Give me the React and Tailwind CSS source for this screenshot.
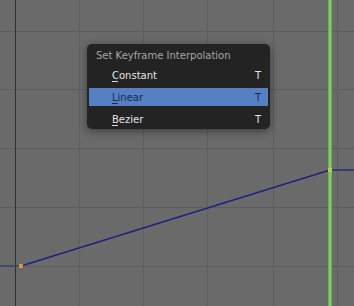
import React from 'react';

const items = [
  { label: 'Constant', key: 'T' },
  { label: 'Linear', key: 'T', active: true },
  { label: 'Bezier', key: 'T' },
];

function Graph() {
  const vLines = [79, 143, 207, 273, 337];
  const hLines = [31, 89, 148, 207, 266];
  return (
    <svg width="354" height="306" className="absolute inset-0" shapeRendering="crispEdges">
      {hLines.map((y) => (
        <rect key={'h' + y} x="0" y={y} width="354" height="1" fill="#5e5e5e" />
      ))}
      {vLines.map((x) => (
        <rect key={'v' + x} x={x} y="0" width="1" height="306" fill="#5e5e5e" />
      ))}
      <rect x="15" y="0" width="1" height="306" fill="#2f2f2f" />
      <rect x="328" y="0" width="4" height="306" fill="#6cb257" />
      <rect x="329" y="0" width="2" height="306" fill="#84c86e" />
      <g shapeRendering="auto">
        <line x1="0" y1="266" x2="21" y2="266" stroke="#2f4a66" strokeWidth="1.5" />
        <line x1="21" y1="266" x2="330" y2="170" stroke="#202080" strokeWidth="1.5" />
        <line x1="330" y1="170" x2="354" y2="170" stroke="#22307c" strokeWidth="1.5" />
      </g>
      <rect x="19" y="264" width="4" height="4" fill="#d69a3e" />
      <rect x="328" y="168" width="4" height="4" fill="#b6cf3e" />
    </svg>
  );
}

function Menu() {
  return (
    <div
      className="absolute left-[87px] top-[44px] w-[183px] h-[85px] rounded-[5px] bg-[#232323] shadow-[0_2px_8px_rgba(0,0,0,0.45)] px-[2px] flex flex-col"
      style={{ fontFamily: '"DejaVu Sans", sans-serif' }}
    >
      <div className="h-[22px] pt-[6px] pl-[7px] text-[10px] leading-[12px] text-[#a6a6a6]">
        Set Keyframe Interpolation
      </div>
      <div className="flex flex-col gap-[4px]">
        {items.map((it) => (
          <div
            key={it.label}
            className={
              'h-[18px] flex items-center justify-between pl-[23px] pr-[7px] text-[10px] ' +
              (it.active ? 'bg-[#5680c2] text-[#172a52]' : 'text-[#e4e4e4]')
            }
          >
            <span className="relative">
              {it.label}
              <span
                className={
                  'absolute left-0 top-[13px] w-[6px] h-px ' +
                  (it.active ? 'bg-[#172a52]' : 'bg-[#d8d8d8]')
                }
              />
            </span>
            <span>{it.key}</span>
          </div>
        ))}
      </div>
    </div>
  );
}

export default function App() {
  return (
    <div className="relative w-[354px] h-[306px] overflow-hidden bg-[#6a6a6a]">
      <Graph />
      <Menu />
    </div>
  );
}
